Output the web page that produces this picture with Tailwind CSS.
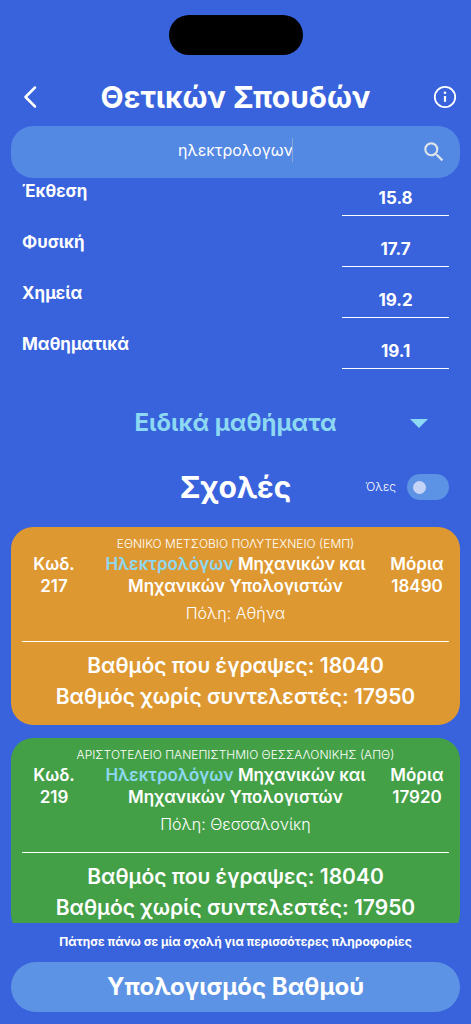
<!DOCTYPE html>
<html lang="el">
<head>
<meta charset="utf-8">
<meta name="viewport" content="width=device-width, initial-scale=1">
<title>Θετικών Σπουδών</title>
<script src="https://cdn.jsdelivr.net/npm/@tailwindcss/browser@4"></script>
</head>
<body class="bg-[#3963dc] font-['Inter',sans-serif] text-white">
<div class="flex h-screen flex-col overflow-hidden">
  <div class="flex shrink-0 justify-center pt-[15px]">
    <div class="h-10 w-[134px] rounded-full bg-black"></div>
  </div>
  <header class="mt-5 grid shrink-0 grid-cols-[32px_1fr_32px] items-center px-[14px]">
    <button aria-label="Πίσω" class="flex justify-center">
      <svg class="h-6 w-6" viewBox="0 0 24 24" fill="none" stroke="currentColor" stroke-width="2.5" stroke-linecap="round" stroke-linejoin="round"><path d="M17 2.500 7.500 12 17 21.500"/></svg>
    </button>
    <h1 class="text-center text-[30px] leading-[44px] font-bold">Θετικών Σπουδών</h1>
    <button aria-label="Πληροφορίες" class="flex justify-end">
      <svg class="h-6 w-6" viewBox="0 0 24 24" fill="none" stroke="currentColor" stroke-width="1.800"><circle cx="12" cy="12" r="10.200"/><path d="M12 11v5.800" stroke-width="2.200"/><circle cx="12" cy="7.800" r="1.300" fill="currentColor" stroke="none"/></svg>
    </button>
  </header>
  <label class="relative mx-[11px] mt-[7px] flex h-[52px] shrink-0 items-center rounded-[22px] bg-[#5388e3]">
    <input type="text" aria-label="Αναζήτηση" value="ηλεκτρολογων" class="h-full w-full bg-transparent px-12 pb-1 text-center text-[16px] outline-none">
    <span class="absolute top-3 left-1/2 ml-14 h-6 w-px bg-[#8ba6d8]"></span>
    <svg class="absolute right-[13px] h-[26px] w-[26px] text-[#dfe3ea]" viewBox="0 0 24 24" fill="currentColor"><path d="M15.500 14h-.79l-.28-.27A6.471 6.471 0 0 0 16 9.500 6.500 6.500 0 1 0 9.500 16c1.610 0 3.090-.59 4.230-1.570l.27.28v.79l5 4.990L20.490 19l-4.990-5zm-6 0C7.010 14 5 11.990 5 9.500S7.010 5 9.500 5 14 7.010 14 9.500 11.990 14 9.500 14z"/></svg>
  </label>

  <main class="flex min-h-0 flex-1 flex-col overflow-hidden px-[11px]">
    <div class="flex shrink-0 flex-col gap-[13px] px-[11px] text-[17px] font-bold">
      <div class="flex items-start justify-between"><label for="g1" class="leading-[26px]">Έκθεση</label><input id="g1" value="15.8" class="h-[38px] w-1/4 border-b border-white bg-transparent pt-0.5 text-center outline-none"></div>
      <div class="flex items-start justify-between"><label for="g2" class="leading-[26px]">Φυσική</label><input id="g2" value="17.7" class="h-[38px] w-1/4 border-b border-white bg-transparent pt-0.5 text-center outline-none"></div>
      <div class="flex items-start justify-between"><label for="g3" class="leading-[26px]">Χημεία</label><input id="g3" value="19.2" class="h-[38px] w-1/4 border-b border-white bg-transparent pt-0.5 text-center outline-none"></div>
      <div class="flex items-start justify-between"><label for="g4" class="leading-[26px]">Μαθηματικά</label><input id="g4" value="19.1" class="h-[38px] w-1/4 border-b border-white bg-transparent pt-0.5 text-center outline-none"></div>
    </div>
    <button class="mt-8 grid shrink-0 grid-cols-[1fr_auto_1fr] items-center text-[24px] leading-[44px] font-bold text-[#8dd8f2]">
      <span></span><span>Ειδικά μαθήματα</span>
      <svg class="mr-8 h-[9px] w-[18px] justify-self-end" viewBox="0 0 18 9" fill="currentColor"><path d="M0 0h18L9 9z"/></svg>
    </button>
    <div class="mt-5 grid shrink-0 grid-cols-[1fr_auto_1fr] items-center pr-[11px]">
      <span></span>
      <h2 class="pl-[11px] text-[30px] leading-[44px] font-bold">Σχολές</h2>
      <label class="flex items-center justify-end gap-[11px] text-[12px] font-light">Όλες
        <span class="flex h-[26px] w-[42px] items-center rounded-full bg-[#5c93e4] px-[6px]">
          <input type="checkbox" class="h-[13px] w-[13px] appearance-none rounded-full bg-[#c5d3f6] checked:ml-auto">
        </span>
      </label>
    </div>
    <article class="mt-[18px] shrink-0 rounded-[22px] bg-[#de9831] px-[11px] pt-2 pb-[13px] text-center">
      <p class="text-[12px] leading-[18px] font-light">ΕΘΝΙΚΟ ΜΕΤΣΟΒΙΟ ΠΟΛΥΤΕΧΝΕΙΟ (ΕΜΠ)</p>
      <div class="grid grid-cols-[64px_1fr_64px] text-[17px] leading-[22px] font-semibold">
        <div>Κωδ.<br>217</div>
        <h3><span class="text-[#8dd8f2]">Ηλεκτρολόγων</span> Μηχανικών και<br>Μηχανικών Υπολογιστών</h3>
        <div>Μόρια<br>18490</div>
      </div>
      <p class="mt-[5px] text-[16px] leading-[22px] font-light">Πόλη: Αθήνα</p>
      <hr class="mt-[17px] mb-2 border-white">
      <p class="text-[21px] leading-[31px] font-semibold">Βαθμός που έγραψες: 18040<br>Βαθμός χωρίς συντελεστές: 17950</p>
    </article>
    <article class="mt-[13px] shrink-0 rounded-[22px] bg-[#44a047] px-[11px] pt-2 pb-[13px] text-center">
      <p class="text-[12px] leading-[18px] font-light">ΑΡΙΣΤΟΤΕΛΕΙΟ ΠΑΝΕΠΙΣΤΗΜΙΟ ΘΕΣΣΑΛΟΝΙΚΗΣ (ΑΠΘ)</p>
      <div class="grid grid-cols-[64px_1fr_64px] text-[17px] leading-[22px] font-semibold">
        <div>Κωδ.<br>219</div>
        <h3><span class="text-[#8dd8f2]">Ηλεκτρολόγων</span> Μηχανικών και<br>Μηχανικών Υπολογιστών</h3>
        <div>Μόρια<br>17920</div>
      </div>
      <p class="mt-[5px] text-[16px] leading-[22px] font-light">Πόλη: Θεσσαλονίκη</p>
      <hr class="mt-[17px] mb-2 border-white">
      <p class="text-[21px] leading-[31px] font-semibold">Βαθμός που έγραψες: 18040<br>Βαθμός χωρίς συντελεστές: 17950</p>
    </article>
  </main>
  <footer class="shrink-0 px-[11px] pt-[9px] pb-3 text-center">
    <p class="text-[12px] leading-5 font-bold">Πάτησε πάνω σε μία σχολή για περισσότερες πληροφορίες</p>
    <button class="mt-[10px] h-[50px] w-full rounded-full bg-[#5c93e4] text-[24px] font-bold">Υπολογισμός Βαθμού</button>
  </footer>
</div>
</body>
</html>
